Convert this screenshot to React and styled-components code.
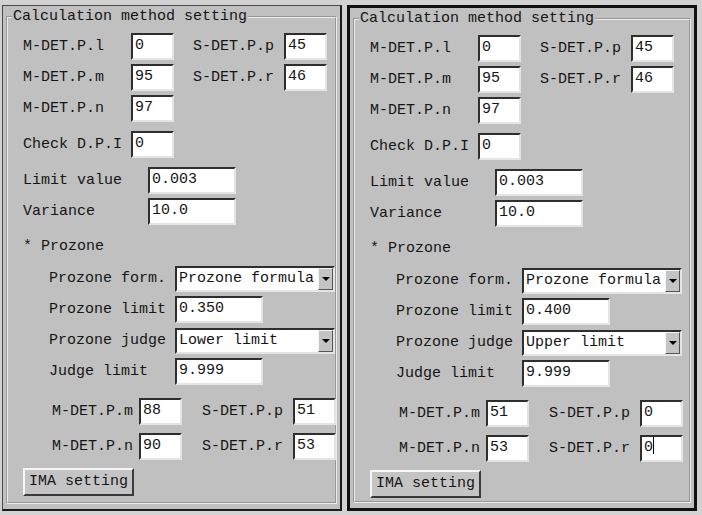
import React from 'react'
import styled, { createGlobalStyle } from 'styled-components'

const GlobalStyle = createGlobalStyle`
  html, body {
    margin: 0;
    padding: 0;
    background: #d2d2d2;
  }
  body {
    font-family: "Liberation Mono", "Courier New", monospace;
    font-size: 15px;
    color: #151515;
  }
`

const Page = styled.div`
  display: flex;
  gap: 5px;
  padding: 5px 0 0 2px;
  width: 702px;
  height: 515px;
  box-sizing: border-box;
`

const Panel = styled.div`
  width: ${p => (p.$active ? 350 : 340)}px;
  height: 506px;
  box-sizing: border-box;
  background: #c0c0c0;
  display: flex;
  flex-direction: column;
  padding: 2px 3px 5px 3px;
  border-style: solid;
  border-color: ${p => (p.$active ? '#111' : '#4a4a4a #1c1c1c #1c1c1c #4a4a4a')};
  border-width: ${p => (p.$active ? '3px' : '1px 2px 2px 1px')};
`

const Group = styled.fieldset`
  flex: 1;
  margin: 0;
  padding: 0;
  min-width: 0;
  border: 2px groove #ececec;
`

const Title = styled.legend`
  margin-left: 4px;
  padding: 0 1px;
  line-height: 17px;
  font-size: 15px;
`

const Body = styled.div`
  padding-left: 15px;
  display: flex;
  flex-direction: column;
`

const Grid = styled.div`
  display: grid;
  grid-template-columns: ${p => p.$cols};
  grid-auto-rows: 27px;
  row-gap: ${p => p.$rowGap || 4}px;
  align-items: center;
  margin-top: ${p => p.$mt}px;
  padding-left: ${p => p.$indent || 0}px;
`

const Label = styled.span`
  white-space: pre;
  text-align: ${p => (p.$right ? 'right' : 'left')};
  padding-right: ${p => (p.$right ? 6 : 0)}px;
`

const Heading = styled.div`
  margin-top: 12px;
  line-height: 20px;
`

const sunken = `
  box-sizing: border-box;
  background: #fff;
  border: 2px solid;
  border-color: #2e2e2e #e4e4e4 #e4e4e4 #2e2e2e;
`

const TextBox = styled.div`
  ${sunken}
  width: ${p => p.$w}px;
  height: 27px;
  line-height: 22px;
  padding-left: 2px;
  white-space: pre;
`

const Caret = styled.span`
  display: inline-block;
  width: 1px;
  height: 17px;
  background: #000;
  vertical-align: -3px;
`

const Select = styled.div`
  ${sunken}
  width: 160px;
  height: 26px;
  display: flex;
  align-items: stretch;
`

const SelectText = styled.span`
  flex: 1;
  line-height: 21px;
  padding-left: 2px;
  white-space: pre;
  overflow: hidden;
`

const ArrowButton = styled.span`
  width: 15px;
  box-sizing: border-box;
  background: #c4c4c4;
  border: 1px solid;
  border-color: #f4f4f4 #555 #555 #f4f4f4;
  display: flex;
  align-items: center;
  justify-content: center;

  &::after {
    content: '';
    border-left: 4px solid transparent;
    border-right: 4px solid transparent;
    border-top: 4px solid #000;
  }
`

const Button = styled.div`
  margin-top: 8px;
  width: 111px;
  height: 28px;
  box-sizing: border-box;
  background: #c4c4c4;
  border: 2px solid;
  border-color: #f6f6f6 #3a3a3a #3a3a3a #f6f6f6;
  line-height: 24px;
  text-align: center;
  white-space: pre;
`

function Setting({ data, active }) {
  return (
    <Panel $active={active}>
      <Group>
        <Title>Calculation method setting</Title>
        <Body>
          <Grid $cols="108px 62px 91px 43px" $mt={8}>
            <Label>M-DET.P.l</Label>
            <TextBox $w={43}>0</TextBox>
            <Label>S-DET.P.p</Label>
            <TextBox $w={43}>45</TextBox>
            <Label>M-DET.P.m</Label>
            <TextBox $w={43}>95</TextBox>
            <Label>S-DET.P.r</Label>
            <TextBox $w={43}>46</TextBox>
            <Label>M-DET.P.n</Label>
            <TextBox $w={43}>97</TextBox>
          </Grid>

          <Grid $cols="108px 43px" $mt={9}>
            <Label>Check D.P.I</Label>
            <TextBox $w={43}>0</TextBox>
          </Grid>

          <Grid $cols="125px 88px" $mt={9}>
            <Label>Limit value</Label>
            <TextBox $w={88}>0.003</TextBox>
            <Label>Variance</Label>
            <TextBox $w={88}>10.0</TextBox>
          </Grid>

          <Heading>* Prozone</Heading>

          <Grid $cols="126px 160px" $mt={8} $indent={26}>
            <Label>Prozone form.</Label>
            <Select>
              <SelectText>Prozone formula</SelectText>
              <ArrowButton />
            </Select>
            <Label>Prozone limit</Label>
            <TextBox $w={88}>{data.limit}</TextBox>
            <Label>Prozone judge</Label>
            <Select>
              <SelectText>{data.judge}</SelectText>
              <ArrowButton />
            </Select>
            <Label>Judge limit</Label>
            <TextBox $w={88}>9.999</TextBox>
          </Grid>

          <Grid $cols="90px 63px 91px 43px" $mt={13} $rowGap={8} $indent={26}>
            <Label $right>M-DET.P.m</Label>
            <TextBox $w={43}>{data.m}</TextBox>
            <Label>S-DET.P.p</Label>
            <TextBox $w={43}>{data.p}</TextBox>
            <Label $right>M-DET.P.n</Label>
            <TextBox $w={43}>{data.n}</TextBox>
            <Label>S-DET.P.r</Label>
            <TextBox $w={43}>
              {data.r}
              {data.caret && <Caret />}
            </TextBox>
          </Grid>

          <Button>IMA setting</Button>
        </Body>
      </Group>
    </Panel>
  )
}

const panels = [
  { limit: '0.350', judge: 'Lower limit', m: '88', n: '90', p: '51', r: '53' },
  { limit: '0.400', judge: 'Upper limit', m: '51', n: '53', p: '0', r: '0', caret: true },
]

export default function App() {
  return (
    <>
      <GlobalStyle />
      <Page>
        <Setting data={panels[0]} />
        <Setting data={panels[1]} active />
      </Page>
    </>
  )
}
